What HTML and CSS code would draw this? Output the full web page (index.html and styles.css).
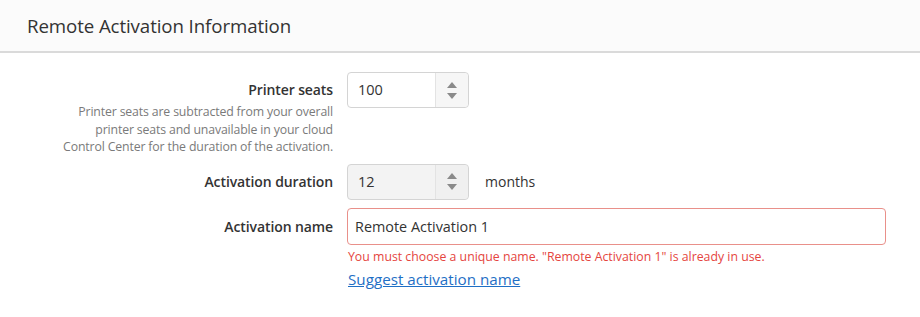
FILE: index.html
```html
<!DOCTYPE html>
<html>
<head>
<meta charset="utf-8">
<link rel="stylesheet" href="styles.css">
</head>
<body>
<div class="panel-head">
  <h2 class="panel-title">Remote Activation Information</h2>
</div>
<div class="form">
  <div class="row">
    <div class="label-col">
      <div class="label">Printer seats</div>
      <div class="help">Printer seats are subtracted from your overall<br>printer seats and unavailable in your cloud<br>Control Center for the duration of the activation.</div>
    </div>
    <div class="field-col">
      <div class="spin">
        <span class="spin-value">100</span>
        <span class="spin-btns"><span class="tri-up"></span><span class="tri-down"></span></span>
      </div>
    </div>
  </div>
  <div class="row">
    <div class="label-col">
      <div class="label">Activation duration</div>
    </div>
    <div class="field-col inline">
      <div class="spin disabled">
        <span class="spin-value">12</span>
        <span class="spin-btns"><span class="tri-up"></span><span class="tri-down"></span></span>
      </div>
      <span class="unit">months</span>
    </div>
  </div>
  <div class="row">
    <div class="label-col">
      <div class="label label-name">Activation name</div>
    </div>
    <div class="field-col">
      <div class="text-input error">Remote Activation 1</div>
      <div class="error-msg">You must choose a unique name. "Remote Activation 1" is already in use.</div>
      <a class="link" href="#">Suggest activation name</a>
    </div>
  </div>
</div>
</body>
</html>
```
FILE: styles.css
```css
html, body {
  margin: 0;
  padding: 0;
  background: #ffffff;
  font-family: "Open Sans", "Noto Sans", sans-serif;
  color: #333333;
}
.panel-head {
  height: 51px;
  background: #fbfbfb;
  border-bottom: 2px solid #dadada;
  display: flex;
  align-items: center;
  padding-left: 27px;
}
.panel-title {
  margin: 0;
  font-size: 18.7px;
  font-weight: 400;
  color: #333;
  letter-spacing: -0.1px;
}
.form {
  padding-top: 19px;
  display: flex;
  flex-direction: column;
  gap: 8px;
}
.row {
  display: flex;
  gap: 14px;
}
.label-col {
  width: 333px;
  text-align: right;
  flex: none;
}
.label {
  font-size: 14px;
  font-weight: 600;
  line-height: 20px;
  padding-top: 8px;
  color: #333;
  letter-spacing: -0.1px;
}
.label-name { padding-top: 9px; }
.help {
  margin-top: 3px;
  font-size: 12.3px;
  line-height: 17.5px;
  color: #7a7a7a;
  letter-spacing: -0.15px;
}
.field-col {
  display: flex;
  flex-direction: column;
}
.field-col.inline {
  flex-direction: row;
  align-items: center;
  gap: 16px;
}
.spin {
  width: 120px;
  height: 34px;
  border: 1px solid #d4d4d4;
  border-radius: 4px;
  display: flex;
  background: #fff;
  box-sizing: content-box;
}
.spin.disabled { background: #f3f3f3; }
.spin-value {
  flex: 1;
  font-size: 14.5px;
  line-height: 34px;
  padding-left: 10px;
  color: #333;
}
.spin-btns {
  width: 32px;
  border-left: 1px solid #e3e3e3;
  background: #f6f6f6;
  border-radius: 0 4px 4px 0;
  display: flex;
  flex-direction: column;
  align-items: center;
  justify-content: center;
  gap: 5px;
}
.spin.disabled .spin-btns { background: #f0f0f0; }
.tri-up, .tri-down {
  width: 0;
  height: 0;
  border-left: 5px solid transparent;
  border-right: 5px solid transparent;
}
.tri-up { border-bottom: 6px solid #8a8a8a; }
.tri-down { border-top: 6px solid #8a8a8a; }
.unit {
  font-size: 14px;
  color: #333;
}
.text-input {
  width: 530px;
  height: 35px;
  border: 1.5px solid #e9908a;
  border-radius: 4px;
  font-size: 14.4px;
  line-height: 35px;
  padding-left: 7px;
  color: #333;
}
.error-msg {
  margin-top: 5px;
  font-size: 12.3px;
  line-height: 14px;
  color: #e5453e;
  padding-left: 1px;
}
.link {
  margin-top: 5px;
  font-size: 15.2px;
  line-height: 20px;
  color: #1f6fc5;
  text-decoration: underline;
  padding-left: 1px;
}
```
